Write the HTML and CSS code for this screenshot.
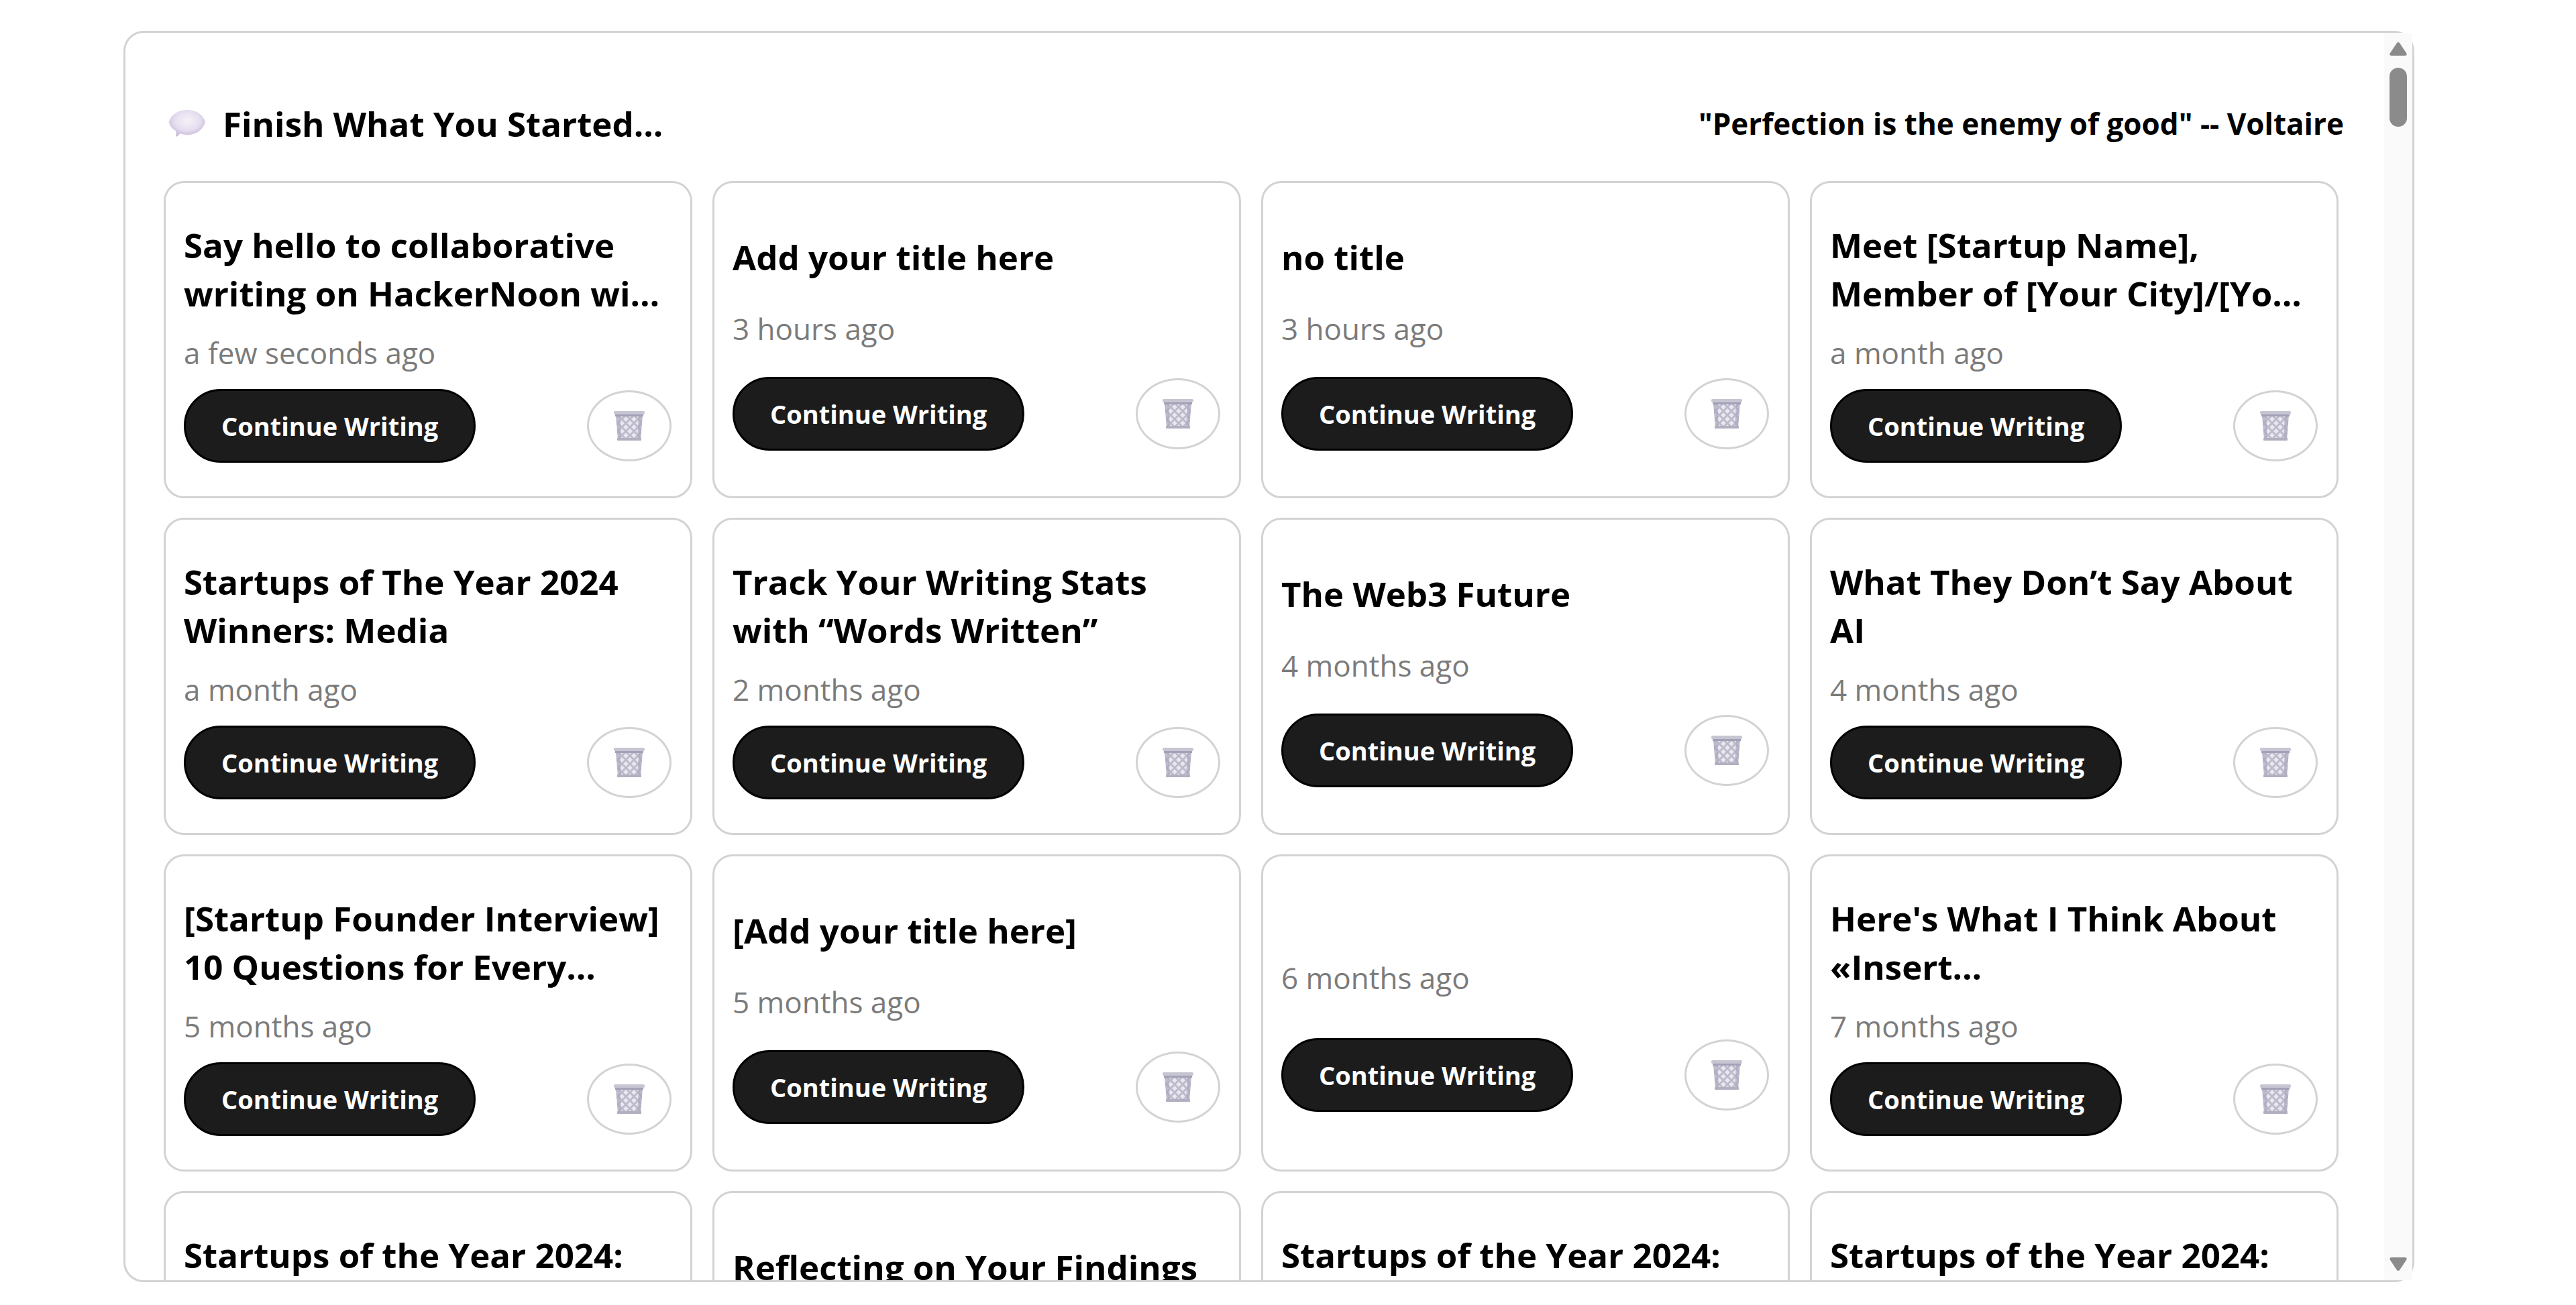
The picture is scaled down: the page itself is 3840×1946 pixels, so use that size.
FILE: index.html
```
<!DOCTYPE html>
<html lang="en">

<head>
    <meta charset="UTF-8">
    <title>Drafts</title>
    <link rel="stylesheet" href="styles.css">
</head>

<body>
    <!-- shared icons -->
    <svg class="sprite" aria-hidden="true">
        <defs>
            <radialGradient id="bubble-fill" cx="0.5" cy="0.4" r="0.6">
                <stop offset="0" stop-color="#f5f1f8" />
                <stop offset="0.6" stop-color="#e6def0" />
                <stop offset="1" stop-color="#c3b6d4" />
            </radialGradient>
            <pattern id="mesh" width="12" height="12" patternUnits="userSpaceOnUse">
                <rect width="12" height="12" fill="#e9e8f0" />
                <path d="M0 0L12 12M12 0L0 12" stroke="#bdbbcb" stroke-width="3" />
            </pattern>
        </defs>
        <symbol id="trash" viewBox="0 0 46 44">
            <path d="M3 5H43L40 42H6Z" fill="url(#mesh)" />
            <path d="M3 5H9L11 42H6ZM43 5H37L35 42H40Z" fill="#aaa8bd" opacity="0.7" />
            <rect x="5" y="40" width="36" height="4" rx="1" fill="#b1afc0" />
            <rect x="2" y="4" width="42" height="4" fill="#a3a1b8" />
            <rect x="0" y="0" width="46" height="5" rx="2" fill="#c6c5d2" />
        </symbol>
    </svg>

    <div class="panel">
        <div class="panel-content">
            <div class="panel-header">
                <h2 class="panel-title">
                    <svg class="bubble" viewBox="0 0 54 40" aria-hidden="true">
                        <path d="M27 0C42 0 52 9 54 18C51 29 41 37 27 37C23 37 19 36 16 35C15 37 13 39 10 40C11 37 11 34 10 31C4 28 1 23 0 18C2 9 12 0 27 0Z" fill="url(#bubble-fill)" />
                    </svg>
                    Finish What You Started...
                </h2>
                <div class="quote">"Perfection is the enemy of good" -- Voltaire</div>
            </div>

            <div class="drafts" id="drafts"></div>
        </div>

        <div class="scrollbar" aria-hidden="true">
            <svg class="arrow" viewBox="0 0 26 20"><path d="M11 1Q13 -1 15 1L25 16Q27 20 23 20H3Q-1 20 1 16Z" fill="#8b8b8b" /></svg>
            <div class="thumb"></div>
            <svg class="arrow arrow-down" viewBox="0 0 26 20"><path d="M11 19Q13 21 15 19L25 4Q27 0 23 0H3Q-1 0 1 4Z" fill="#8b8b8b" /></svg>
        </div>
    </div>

    <script src="drafts.js"></script>
</body>

</html>
```

FILE: styles.css
```
* {
    box-sizing: border-box;
}

body {
    margin: 0;
    padding: 46px 241px 34px 184px;
    height: 100vh;
    background-color: #fff;
    color: #000;
    font-family: "Open Sans", "Noto Sans", sans-serif;
}

.sprite {
    position: absolute;
    width: 0;
    height: 0;
}

.panel {
    display: flex;
    height: 100%;
    border: 3px solid #d3d3d3;
    border-radius: 30px;
}

.panel-content {
    flex: 1;
    min-width: 0;
    overflow: hidden;
    padding: 95px 68px 0 57px;
    border-radius: 27px 0 0 27px;
}

.panel-header {
    display: flex;
    align-items: center;
    justify-content: space-between;
    height: 80px;
    margin: 0 -8px 46px 8px;
}

.panel-title {
    display: flex;
    align-items: center;
    gap: 26px;
    margin: 0;
    font-size: 51px;
    font-weight: 700;
}

.bubble {
    width: 54px;
    height: 40px;
}

.quote {
    font-size: 44px;
    font-weight: 700;
}

.drafts {
    display: grid;
    grid-template-columns: repeat(4, 1fr);
    gap: 29px 30px;
}

.draft {
    display: flex;
    flex-direction: column;
    justify-content: space-evenly;
    height: 473px;
    padding: 54px 28px 49px 27px;
    border: 3px solid #d3d3d3;
    border-radius: 30px;
}

.draft-title {
    margin: 0;
    font-size: 51px;
    font-weight: 700;
    line-height: 72px;
    white-space: pre-line;
}

.draft-date {
    margin-top: 16px;
    color: #7b7b7b;
    font-size: 44px;
    line-height: 72px;
}

.draft-actions {
    display: flex;
    align-items: center;
    justify-content: space-between;
    margin-top: 16px;
}

.btn-continue {
    height: 110px;
    padding: 0 53px;
    border: 3px solid #000;
    border-radius: 55px;
    background-color: #1c1c1c;
    color: #fff;
    font-family: inherit;
    font-size: 38px;
    font-weight: 700;
}

.btn-delete {
    display: flex;
    align-items: center;
    justify-content: center;
    width: 126px;
    height: 106px;
    padding: 0;
    border: 3px solid #d3d3d3;
    border-radius: 50%;
    background-color: #fff;
}

.btn-delete svg {
    width: 46px;
    height: 44px;
}

.scrollbar {
    display: flex;
    flex-direction: column;
    align-items: center;
    width: 42px;
    padding: 14px 0;
    background-color: #fafafa;
}

.thumb {
    width: 26px;
    height: 88px;
    margin-top: 18px;
    border-radius: 13px;
    background-color: #8b8b8b;
}

.arrow {
    width: 26px;
    height: 20px;
}

.arrow-down {
    margin-top: auto;
}
```

FILE: drafts.js
```
const drafts = [
    { title: 'Say hello to collaborative\nwriting on HackerNoon wi…', date: 'a few seconds ago' },
    { title: 'Add your title here', date: '3 hours ago' },
    { title: 'no title', date: '3 hours ago' },
    { title: 'Meet [Startup Name],\nMember of [Your City]/[Yo…', date: 'a month ago' },
    { title: 'Startups of The Year 2024\nWinners: Media', date: 'a month ago' },
    { title: 'Track Your Writing Stats\nwith “Words Written”', date: '2 months ago' },
    { title: 'The Web3 Future', date: '4 months ago' },
    { title: 'What They Don’t Say About\nAI', date: '4 months ago' },
    { title: '[Startup Founder Interview]\n10 Questions for Every…', date: '5 months ago' },
    { title: '[Add your title here]', date: '5 months ago' },
    { title: '', date: '6 months ago' },
    { title: 'Here\'s What I Think About\n«Insert…', date: '7 months ago' },
    { title: 'Startups of the Year 2024:\nWinners', date: '7 months ago' },
    { title: 'Reflecting on Your Findings', date: '7 months ago' },
    { title: 'Startups of the Year 2024:\nWinners', date: '7 months ago' },
    { title: 'Startups of the Year 2024:\nWinners', date: '7 months ago' }
];

const list = document.getElementById('drafts');

drafts.forEach(draft => {
    const card = document.createElement('div');
    card.className = 'draft';
    card.innerHTML = `
        <h3 class="draft-title">${draft.title}</h3>
        <div class="draft-date">${draft.date}</div>
        <div class="draft-actions">
            <button class="btn-continue" type="button">Continue Writing</button>
            <button class="btn-delete" type="button" aria-label="Delete draft">
                <svg><use href="#trash"></use></svg>
            </button>
        </div>`;
    list.appendChild(card);
});
```
